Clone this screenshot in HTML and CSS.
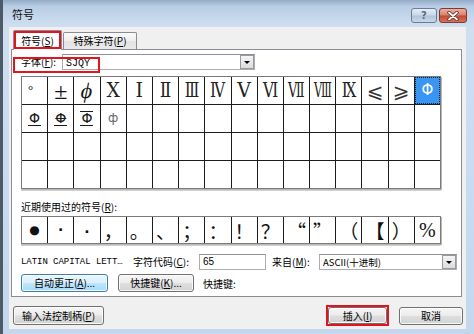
FILE: index.html
```html
<!DOCTYPE html>
<html lang="zh-CN">
<head>
<meta charset="utf-8">
<title>符号</title>
<link rel="stylesheet" href="styles.css">
</head>
<body>
<div class="window">
  <div class="titlebar">
    <span class="title">符号</span>
    <div class="caption">
      <span class="cbtn help">?</span>
      <span class="cbtn close">
        <svg width="12" height="10" viewBox="0 0 12 10"><path d="M2 1.5 L10 8.5 M10 1.5 L2 8.5" stroke="#5a2a22" stroke-width="3.4" stroke-linecap="round"/><path d="M2 1.5 L10 8.5 M10 1.5 L2 8.5" stroke="#ffffff" stroke-width="1.8" stroke-linecap="round"/></svg>
      </span>
    </div>
  </div>
  <div class="client">
    <div class="tabs">
      <div class="tab active mark">符号(<u>S</u>)</div>
      <div class="tab second">特殊字符(<u>P</u>)</div>
    </div>
    <div class="panel">
      <div class="font-row">
        <span class="font-label">字体(<u>F</u>):</span>
        <div class="combo font-combo"><span class="combo-text mono">SJQY</span><span class="drop"><i></i></span></div>
        <span class="font-mark"></span>
      </div>
      <div class="grid symbols">
        <span class="c deg">°</span>
        <span class="c pm">±</span>
        <span class="c phi"><i>ϕ</i></span>
        <span class="c rn"><i>Ⅹ</i></span>
        <span class="c rn"><i>Ⅰ</i></span>
        <span class="c rn w2"><i>Ⅱ</i></span>
        <span class="c rn w3"><i>Ⅲ</i></span>
        <span class="c rn w3"><i>Ⅳ</i></span>
        <span class="c rn"><i>Ⅴ</i></span>
        <span class="c rn w3"><i>Ⅵ</i></span>
        <span class="c rn w4"><i>Ⅶ</i></span>
        <span class="c rn w5"><i>Ⅷ</i></span>
        <span class="c rn w3"><i>Ⅸ</i></span>
        <span class="c le">⩽</span>
        <span class="c le">⩾</span>
        <span class="c sel"><b>Φ</b></span>
        <span class="c rb"><b class="r1">Φ</b></span>
        <span class="c rb"><b class="r2">Φ</b></span>
        <span class="c rb"><b class="r3">Φ</b></span>
        <span class="c rb small"><b class="r4">ф</b></span>
        <span class="c"></span><span class="c"></span><span class="c"></span><span class="c"></span>
        <span class="c"></span><span class="c"></span><span class="c"></span><span class="c"></span>
        <span class="c"></span><span class="c"></span><span class="c"></span><span class="c"></span>
        <span class="c"></span><span class="c"></span><span class="c"></span><span class="c"></span>
        <span class="c"></span><span class="c"></span><span class="c"></span><span class="c"></span>
        <span class="c"></span><span class="c"></span><span class="c"></span><span class="c"></span>
        <span class="c"></span><span class="c"></span><span class="c"></span><span class="c"></span>
        <span class="c"></span><span class="c"></span><span class="c"></span><span class="c"></span>
        <span class="c"></span><span class="c"></span><span class="c"></span><span class="c"></span>
        <span class="c"></span><span class="c"></span><span class="c"></span><span class="c"></span>
        <span class="c"></span><span class="c"></span><span class="c"></span><span class="c"></span>
      </div>
      <div class="recent-label">近期使用过的符号(<u>R</u>):</div>
      <div class="grid recent">
        <span class="c dot">●</span>
        <span class="c mid">·</span>
        <span class="c mid low">·</span>
        <span class="c">，</span>
        <span class="c">。</span>
        <span class="c">、</span>
        <span class="c">；</span>
        <span class="c">：</span>
        <span class="c">！</span>
        <span class="c">？</span>
        <span class="c qr">“</span>
        <span class="c ql">”</span>
        <span class="c">（</span>
        <span class="c">【</span>
        <span class="c">）</span>
        <span class="c pct">%</span>
      </div>
      <div class="info-row">
        <span class="char-name mono">LATIN CAPITAL LETT…</span>
        <span class="code-label">字符代码(<u>C</u>):</span>
        <span class="field code-input">65</span>
        <span class="from-label">来自(<u>M</u>):</span>
        <div class="combo from-combo"><span class="combo-text">ASCII(十进制)</span><span class="drop"><i></i></span></div>
      </div>
      <div class="btn-row">
        <span class="btn hot autocorrect">自动更正(<u>A</u>)...</span>
        <span class="btn shortcut">快捷键(<u>K</u>)...</span>
        <span class="shortcut-label">快捷键:</span>
      </div>
    </div>
    <div class="footer">
      <span class="btn ime">输入法控制柄(<u>P</u>)</span>
      <span class="spacer"></span>
      <span class="btn insert">插入(<u>I</u>)</span>
      <span class="btn cancel">取消</span>
    </div>
  </div>
</div>
</body>
</html>
```
FILE: styles.css
```css
* { box-sizing: border-box; }
html, body { margin: 0; padding: 0; }
body {
  width: 474px;
  height: 334px;
  overflow: hidden;
  font-family: "Noto Sans CJK SC", "Liberation Sans", sans-serif;
  font-size: 10px;
  color: #000;
}
u { text-decoration: underline; text-underline-offset: 1px; }
i { font-style: normal; }
.mono { font-family: "Liberation Mono", "Noto Sans CJK SC", monospace; }

.window {
  width: 474px;
  height: 334px;
  display: flex;
  flex-direction: column;
  border-left: 3px solid #4d5a67;
  background: linear-gradient(#93abc6 0, #b7cce3 6px, #c9daed 20px, #cfdff0 27px, #c4d7ec 100%);
}

.titlebar {
  height: 27px;
  flex: none;
  display: flex;
  justify-content: space-between;
  align-items: flex-start;
  padding: 0 7px 0 9px;
}
.title { margin-top: 7px; font-size: 11px; line-height: 14px; color: #111; }
.caption { display: flex; margin-top: 8px; }
.cbtn {
  height: 15px;
  border: 1px solid #6a7d94;
  border-radius: 3px;
  display: flex;
  align-items: center;
  justify-content: center;
}
.help {
  width: 26px;
  background: linear-gradient(#e4edf6, #c9d8e9 48%, #afc3da 52%, #c7d8ea);
  color: #5b6b7e;
  font-family: "DejaVu Sans", sans-serif;
  font-size: 10px;
  font-weight: bold;
  line-height: 13px;
}
.close {
  width: 28px;
  margin-left: 2px;
  border-color: #7e3b2f;
  background: linear-gradient(#eab1a4, #d9806d 48%, #c4472f 52%, #d7735b);
}

.client {
  flex: 1;
  margin: 0 8px 5px 6px;
  background: #f0f0f0;
  display: flex;
  flex-direction: column;
}

.tabs {
  height: 19px;
  margin-top: 3px;
  padding-left: 4px;
  display: flex;
  align-items: flex-end;
  position: relative;
  z-index: 1;
}
.tab {
  height: 17px;
  border: 1px solid #898c95;
  border-bottom: none;
  border-radius: 2px 2px 0 0;
  background: linear-gradient(#fbfbfb, #eeeeee 50%, #e3e3e3 51%, #e9e9e9);
  display: flex;
  align-items: center;
  justify-content: center;
  line-height: 14px;
}
.tab.active {
  width: 49px;
  height: 20px;
  margin-bottom: -1px;
  background: #fff;
  position: relative;
}
.tab.second { width: 74px; margin-left: 1px; }
.mark::after {
  content: "";
  position: absolute;
  left: 0; top: 0; right: 0; bottom: 1px;
  border: 2px solid #e2141e;
}

.panel {
  width: 451px;
  height: 248px;
  margin-left: 2px;
  border: 1px solid #898c95;
  background: #fff;
  padding-left: 9px;
}

.font-row {
  height: 16px;
  margin-top: 4px;
  display: flex;
  align-items: center;
  position: relative;
}
.font-label { width: 41px; line-height: 14px; }
.font-mark {
  position: absolute;
  left: -8px;
  top: 3px;
  width: 87px;
  height: 16px;
  border: 2px solid #e2141e;
}

.combo {
  height: 16px;
  border: 1px solid #abadb3;
  border-top-color: #8e9199;
  background: #fff;
  display: flex;
  align-items: center;
}
.combo-text { flex: 1; padding-left: 3px; line-height: 13px; white-space: nowrap; }
.font-combo { width: 193px; }
.font-combo .combo-text { font-size: 10px; padding-top: 2px; }
.drop {
  width: 14px;
  height: 14px;
  border: 1px solid #9a9a9a;
  background: linear-gradient(#f4f4f4, #dcdcdc);
  display: flex;
  align-items: center;
  justify-content: center;
}
.drop i {
  width: 0; height: 0;
  border-left: 3px solid transparent;
  border-right: 3px solid transparent;
  border-top: 3px solid #000;
}

.grid {
  width: 420px;
  display: grid;
  grid-template-columns: repeat(16, 1fr);
  gap: 1px;
  background: #1c1c1c;
  border: 1px solid #7a7a7a;
  box-shadow: 1px 1px 0 #b9b9b9, 0 2px 0 #d0d0d0;
}
.symbols { margin-top: 6px; grid-auto-rows: 27px; }
.c {
  background: #fff;
  display: flex;
  align-items: center;
  justify-content: center;
  overflow: hidden;
  font-family: "Liberation Serif", "DejaVu Serif", "Noto Sans CJK SC", serif;
  font-size: 23px;
  line-height: 1;
  color: #111;
}
.symbols .deg { justify-content: flex-start; align-items: flex-start; padding: 6px 0 0 6px; font-size: 13px; }
.symbols .pm { font-size: 24px; }
.symbols .phi { font-family: "Liberation Serif", "DejaVu Sans", serif; font-size: 22px; }
.symbols .phi i { display: inline-block; transform: skewX(-12deg); }
.symbols .rn {
  font-family: "DejaVu Serif", "Noto Sans CJK SC", serif;
  font-stretch: condensed;
  font-size: 21px;
  color: #222;
}
.symbols .rn i { display: inline-block; }
.symbols .rn.w2 i { transform: scaleX(0.9); }
.symbols .rn.w3 i { transform: scaleX(0.8); }
.symbols .rn.w4 i { transform: scaleX(0.68); }
.symbols .rn.w5 i { transform: scaleX(0.6); }
.symbols .le { font-family: "DejaVu Sans", "Noto Sans CJK SC", sans-serif; font-size: 20px; color: #333; }
.symbols .sel {
  background: #3896f2;
  outline: 1px dotted #123;
  outline-offset: -1px;
}
.sel b { color: #fff; font-family: "DejaVu Sans", sans-serif; font-weight: normal; font-size: 15px; }
.rb b {
  font-family: "DejaVu Sans", sans-serif;
  font-weight: normal;
  font-size: 14px;
  line-height: 13px;
  display: block;
  padding: 0 1px;
  color: #1a1a1a;
}
.rb .r1 { border-bottom: 1.5px solid #1a1a1a; }
.rb .r2 { border-bottom: 1.5px solid #1a1a1a; text-decoration: line-through; text-decoration-thickness: 1px; }
.rb .r3 { border-top: 1.5px solid #1a1a1a; border-bottom: 1.5px solid #1a1a1a; }
.rb.small b { font-size: 12px; color: #666; }

.recent-label { margin-top: 11px; line-height: 14px; height: 14px; }
.recent { margin-top: 2px; grid-auto-rows: 26px; }
.recent .c { font-family: "Noto Sans CJK SC", sans-serif; font-size: 19px; }
.recent .dot { font-family: "DejaVu Sans", sans-serif; font-size: 12px; }
.recent .mid { font-family: "DejaVu Sans", sans-serif; font-size: 14px; font-weight: bold; }
.recent .low { padding-top: 4px; }
.recent .qr { justify-content: flex-end; padding-right: 3px; }
.recent .ql { justify-content: flex-start; padding-left: 3px; }
.recent .pct { font-family: "Liberation Serif", serif; font-size: 20px; }

.info-row {
  height: 16px;
  margin-top: 10px;
  display: flex;
  align-items: center;
  line-height: 14px;
}
.char-name { width: 112px; font-size: 9px; letter-spacing: -0.05px; white-space: nowrap; }
.code-label { width: 66px; }
.field {
  height: 16px;
  border: 1px solid #abadb3;
  border-top-color: #8e9199;
  background: #fff;
  padding-left: 3px;
  display: flex;
  align-items: center;
}
.code-input { width: 67px; font-family: "Liberation Sans", sans-serif; font-size: 10px; }
.from-label { width: 47px; margin-left: 6px; }
.from-combo { width: 138px; }
.from-combo .combo-text { font-size: 9.5px; }

.btn-row {
  height: 18px;
  margin-top: 4px;
  display: flex;
  align-items: center;
}
.btn {
  height: 18px;
  border: 1px solid #707070;
  border-radius: 3px;
  background: linear-gradient(#f6f6f6, #ececec 48%, #dedede 52%, #d3d3d3);
  box-shadow: inset 0 0 0 1px rgba(255, 255, 255, 0.8);
  display: flex;
  align-items: center;
  justify-content: center;
  line-height: 14px;
  white-space: nowrap;
}
.btn.hot {
  border-color: #3c7fb1;
  background: linear-gradient(#eaf6fd, #d9f0fc 48%, #bee6fd 52%, #a7d9f5);
}
.autocorrect { width: 87px; }
.shortcut { width: 76px; margin-left: 10px; }
.shortcut-label { margin-left: 9px; }

.footer {
  display: flex;
  align-items: center;
  margin-top: 9px;
  padding: 0 3px 0 4px;
}
.btn.ime { width: 91px; height: 19px; }
.spacer { flex: 1; }
.btn.insert {
  width: 59px;
  height: 17px;
  position: relative;
}
.btn.insert::after {
  content: "";
  position: absolute;
  left: -3px; top: -3px; right: -3px; bottom: -3px;
  border: 2px solid #e2141e;
}
.btn.cancel { width: 64px; height: 18px; margin-left: 12px; }
```
